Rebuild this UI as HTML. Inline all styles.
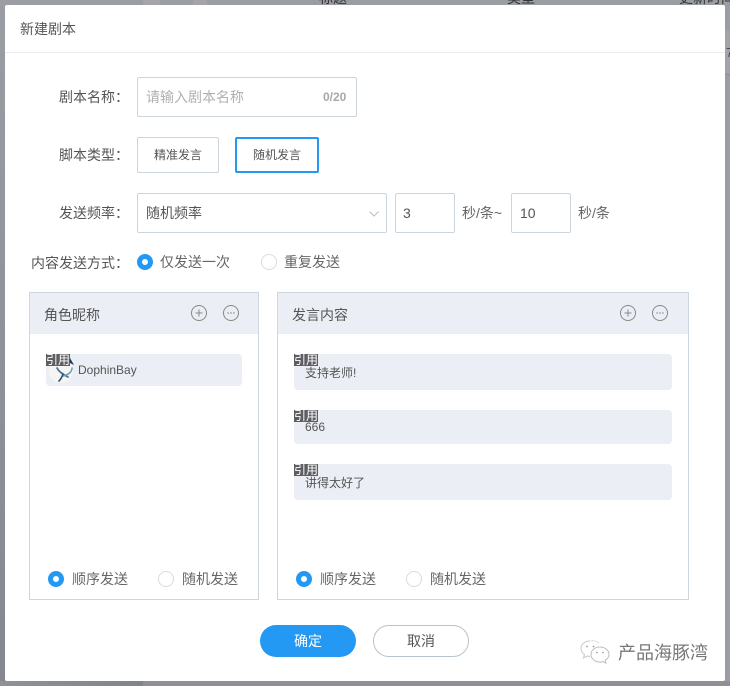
<!DOCTYPE html>
<html lang="zh-CN">
<head>
<meta charset="utf-8">
<title>新建剧本</title>
<style>
html,body{margin:0;padding:0}
body{width:730px;height:686px;overflow:hidden;position:relative;background:#9b9da4;font-family:"Liberation Sans","Noto Sans CJK SC",sans-serif;font-size:14px;color:#555}
.a{position:absolute;white-space:nowrap}
.box{position:absolute;box-sizing:border-box;border:1px solid #ccd5dc;border-radius:2px;background:#fff}
.lab{position:absolute;white-space:nowrap;color:#555;font-size:14px;line-height:18px}
.r{position:absolute;box-sizing:border-box;width:16px;height:16px;border-radius:50%;border:1px solid #d5dde3;background:#fff}
.r.on{border:5px solid #2399f3}
.t{position:absolute;white-space:nowrap;font-size:14px;line-height:18px;color:#666}
.panel{position:absolute;box-sizing:border-box;border:1px solid #ccd7df;background:#fff;top:292px;height:308px}
.head{position:absolute;left:0;right:0;top:0;height:41px;background:#ebeef5}
.head span{position:absolute;left:14px;top:13px;font-size:14px;line-height:18px;color:#555}
.item{position:absolute;background:#ebeef5;border-radius:4px}
.q{position:absolute;left:0;top:0;width:24px;height:12px;background:#5e5e62;color:#fff;font-size:12px;line-height:12px;text-align:center;white-space:nowrap;overflow:hidden}
.it{position:absolute;font-size:12px;line-height:16px;color:#555;white-space:nowrap}
.btn{position:absolute;box-sizing:border-box;top:625px;height:32px;width:96px;border-radius:16px;text-align:center;font-size:14px;line-height:30px}
svg{position:absolute;display:block}
</style>
</head>
<body>
<div class="a" style="left:0;top:0;width:5px;height:686px;background:linear-gradient(#9b9da4,#85878f)"></div>
<div class="a" style="left:0;top:681px;width:143px;height:5px;background:linear-gradient(90deg,#8f9199,#82848c)"></div>
<div class="a" style="left:143px;top:681px;width:587px;height:5px;background:#8f8f96"></div>
<div class="a" style="left:143px;top:0;width:17px;height:5px;background:#a4a5aa"></div>
<div class="a" style="left:193px;top:0;width:14px;height:5px;background:#a4a5aa"></div>
<div class="a" style="left:319px;top:-10px;font-size:14px;line-height:16px;color:#333">标题</div>
<div class="a" style="left:507px;top:-10px;font-size:14px;line-height:16px;color:#333">类型</div>
<div class="a" style="left:679px;top:-10px;font-size:14px;line-height:16px;color:#333">更新时间</div>
<div class="a" style="left:725px;top:31px;width:5px;height:43px;background:#a3a4a8;overflow:hidden"><span style="position:absolute;left:1px;top:14px;font-size:13px;line-height:16px;color:#4a4a55">7</span></div>
<div class="a" style="left:725px;top:74px;width:5px;height:1px;background:#8d8e94"></div>

<div class="a" style="left:5px;top:5px;width:720px;height:676px;background:#fff;border-radius:2px"></div>
<div class="a" style="left:20px;top:20px;font-size:14px;line-height:18px;color:#555">新建剧本</div>
<div class="a" style="left:5px;top:52px;width:720px;height:1px;background:#e9edf2"></div>

<div class="lab" style="left:59px;top:88px">剧本名称：</div>
<div class="box" style="left:137px;top:77px;width:220px;height:40px"></div>
<div class="a" style="left:146px;top:88px;font-size:14px;line-height:18px;color:#b0b0b0">请输入剧本名称</div>
<div class="a" style="left:323px;top:88px;font-size:12px;line-height:18px;color:#a8a8a8;font-weight:bold">0/20</div>

<div class="lab" style="left:59px;top:146px">脚本类型：</div>
<div class="box" style="left:137px;top:137px;width:82px;height:36px;text-align:center;font-size:12px;line-height:34px;color:#555">精准发言</div>
<div class="box" style="left:235px;top:137px;width:84px;height:36px;border:2px solid #2399f3;text-align:center;font-size:12px;line-height:33px;color:#555">随机发言</div>

<div class="lab" style="left:59px;top:204px">发送频率：</div>
<div class="box" style="left:137px;top:193px;width:250px;height:40px"></div>
<div class="a" style="left:146px;top:204px;font-size:14px;line-height:18px;color:#555">随机频率</div>
<svg style="left:368px;top:210px" width="12" height="8" viewBox="0 0 12 8"><path d="M1.5 1.5L6 6L10.500 1.500" fill="none" stroke="#b9bec4" stroke-width="1"/></svg>
<div class="box" style="left:395px;top:193px;width:60px;height:40px"></div>
<div class="a" style="left:403px;top:204px;font-size:14px;line-height:18px;color:#555">3</div>
<div class="a" style="left:462px;top:204px;font-size:14px;line-height:18px;color:#666">秒/条~</div>
<div class="box" style="left:511px;top:193px;width:60px;height:40px"></div>
<div class="a" style="left:520px;top:204px;font-size:14px;line-height:18px;color:#555">10</div>
<div class="a" style="left:578px;top:204px;font-size:14px;line-height:18px;color:#666">秒/条</div>

<div class="lab" style="left:31px;top:254px">内容发送方式：</div>
<div class="r on" style="left:137px;top:254px"></div>
<div class="t" style="left:160px;top:253px">仅发送一次</div>
<div class="r" style="left:261px;top:254px"></div>
<div class="t" style="left:284px;top:253px">重复发送</div>

<div class="panel" style="left:29px;width:230px">
  <div class="head"><span>角色昵称</span></div>
  <svg style="left:160px;top:11px" width="18" height="18" viewBox="0 0 18 18"><circle cx="9" cy="9" r="7.500" fill="none" stroke="#888" stroke-width="1"/><path d="M9 5.500v7M5.500 9h7" stroke="#888" stroke-width="1"/></svg>
  <svg style="left:192px;top:11px" width="18" height="18" viewBox="0 0 18 18"><circle cx="9" cy="9" r="7.500" fill="none" stroke="#888" stroke-width="1"/><path d="M5.500 9h1.200M8.400 9h1.200M11.300 9h1.200" stroke="#777" stroke-width="1.200"/></svg>
  <div class="item" style="left:16px;top:61px;width:196px;height:32px"></div>
  <svg style="left:19px;top:63px" width="26" height="28" viewBox="0 0 26 28"><circle cx="12" cy="15" r="12" fill="#f7f5f2"/><path d="M15 2h6l4 7-6-3-4 0z" fill="#173a68"/><path d="M8 12c2 4 6 6 11 9" fill="none" stroke="#3f7199" stroke-width="1.700" stroke-linecap="round"/><path d="M23 12c0 4-4 7-9 8" fill="none" stroke="#6d9bbb" stroke-width="1.500" stroke-linecap="round"/><path d="M14 18c-1 3-2 5-4 7" fill="none" stroke="#2b5379" stroke-width="1.600" stroke-linecap="round"/></svg>
  <div class="q" style="left:16px;top:61px">引用</div>
  <div class="it" style="left:48px;top:69px">DophinBay</div>
  <div class="r on" style="left:18px;top:278px"></div>
  <div class="t" style="left:42px;top:277px">顺序发送</div>
  <div class="r" style="left:128px;top:278px"></div>
  <div class="t" style="left:152px;top:277px">随机发送</div>
</div>

<div class="panel" style="left:277px;width:412px">
  <div class="head"><span>发言内容</span></div>
  <svg style="left:341px;top:11px" width="18" height="18" viewBox="0 0 18 18"><circle cx="9" cy="9" r="7.500" fill="none" stroke="#888" stroke-width="1"/><path d="M9 5.500v7M5.500 9h7" stroke="#888" stroke-width="1"/></svg>
  <svg style="left:373px;top:11px" width="18" height="18" viewBox="0 0 18 18"><circle cx="9" cy="9" r="7.500" fill="none" stroke="#888" stroke-width="1"/><path d="M5.500 9h1.200M8.400 9h1.200M11.300 9h1.200" stroke="#777" stroke-width="1.200"/></svg>
  <div class="item" style="left:16px;top:61px;width:378px;height:36px"></div>
  <div class="q" style="left:16px;top:61px">引用</div>
  <div class="it" style="left:27px;top:72px">支持老师!</div>
  <div class="item" style="left:16px;top:117px;width:378px;height:34px"></div>
  <div class="q" style="left:16px;top:117px">引用</div>
  <div class="it" style="left:27px;top:126px">666</div>
  <div class="item" style="left:16px;top:171px;width:378px;height:36px"></div>
  <div class="q" style="left:16px;top:171px">引用</div>
  <div class="it" style="left:27px;top:182px">讲得太好了</div>
  <div class="r on" style="left:18px;top:278px"></div>
  <div class="t" style="left:42px;top:277px">顺序发送</div>
  <div class="r" style="left:128px;top:278px"></div>
  <div class="t" style="left:152px;top:277px">随机发送</div>
</div>

<div class="btn" style="left:260px;background:#2399f3;color:#fff;line-height:32px">确定</div>
<div class="btn" style="left:373px;background:#fff;border:1px solid #b8c4cc;color:#555">取消</div>

<svg style="left:579px;top:638px" width="32" height="28" viewBox="0 0 32 28"><path d="M11 3C5.500 3 2 6.500 2 10.500c0 2.500 1.300 4.500 3.500 6L4.500 20l3.800-2c1 .3 1.800.4 2.700.4" fill="none" stroke="#c8c8c8" stroke-width="1"/><path d="M20 5C17 2.500 13 2.500 11 3" fill="none" stroke="#d0d0d0" stroke-width="1" stroke-dasharray="2 1"/><path d="M21 9c-5 0-9 3.200-9 7.500s4 7.500 9 7.500c1 0 2-.1 3-.4l3 1.600-.8-3c2.300-1.400 3.800-3.400 3.800-5.700C30 12.200 26 9 21 9z" fill="none" stroke="#bdbdbd" stroke-width="1"/><circle cx="8" cy="8.500" r=".9" fill="#999"/><circle cx="14.500" cy="8.500" r=".9" fill="#999"/><circle cx="18" cy="14.500" r=".8" fill="#888"/><circle cx="24" cy="14.500" r=".8" fill="#888"/></svg>
<div class="a" style="left:618px;top:642px;font-size:18px;line-height:22px;color:#777">产品海豚湾</div>
</body>
</html>
